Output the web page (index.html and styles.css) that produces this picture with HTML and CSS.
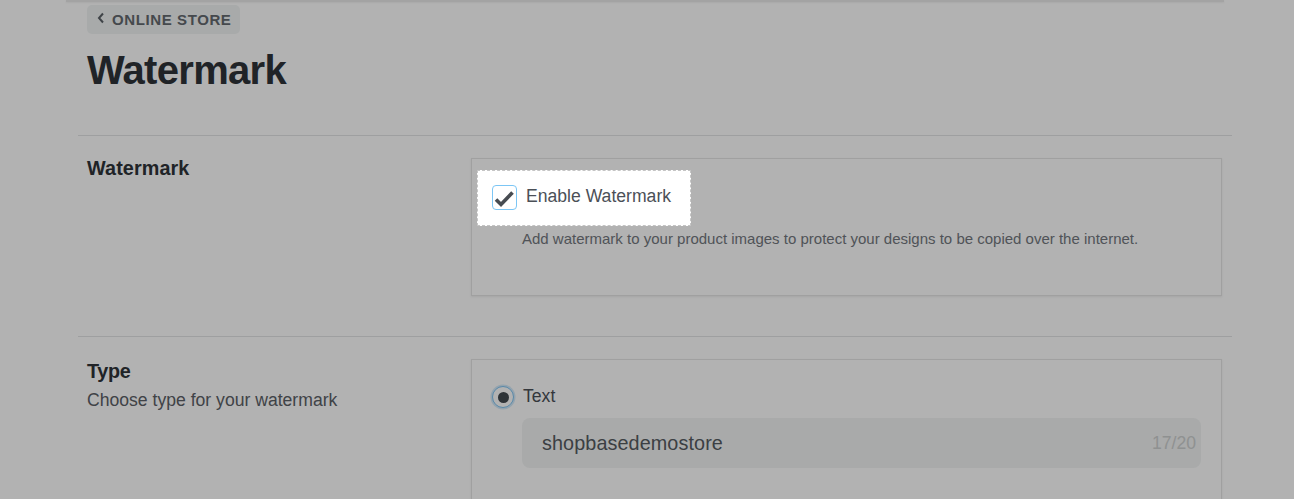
FILE: index.html
```html
<!DOCTYPE html>
<html lang="en">
<head>
<meta charset="utf-8">
<title>Watermark</title>
<link rel="stylesheet" href="styles.css">
</head>
<body>
<div class="topbar"></div>
<main class="page">
  <header class="page-header">
    <a class="breadcrumb" href="#">
      <svg class="chev" width="8" height="12" viewBox="0 0 8 12"><path d="M6 1.5 L2 6 L6 10.5" fill="none" stroke="currentColor" stroke-width="2"/></svg>
      <span>ONLINE STORE</span>
    </a>
    <h1 class="title">Watermark</h1>
  </header>

  <section class="section">
    <div class="section-info">
      <h2 class="section-title section-title-first">Watermark</h2>
    </div>
    <div class="card card-first">
      <label class="spotlight">
        <span class="checkbox">
          <svg width="23" height="23" viewBox="0 0 23 23"><path d="M3 13.5 L8 18.5 L19.5 6.5" fill="none" stroke="#474c52" stroke-width="3.6"/></svg>
        </span>
        <span class="check-label">Enable Watermark</span>
      </label>
      <p class="help">Add watermark to your product images to protect your designs to be copied over the internet.</p>
    </div>
  </section>

  <section class="section">
    <div class="section-info">
      <h2 class="section-title">Type</h2>
      <p class="section-desc">Choose type for your watermark</p>
    </div>
    <div class="card card-second">
      <div class="radio-row">
        <span class="radio"><span class="radio-dot"></span></span>
        <span class="radio-label">Text</span>
      </div>
      <div class="text-input">
        <span class="input-value">shopbasedemostore</span>
        <span class="counter">17/20</span>
      </div>
    </div>
  </section>
</main>
</body>
</html>
```
FILE: styles.css
```css
html, body {
  margin: 0;
  padding: 0;
  height: 100%;
  overflow: hidden;
  background: #ffffff;
  font-family: "Liberation Sans", Arial, sans-serif;
}

.topbar {
  height: 2px;
  margin-left: 66px;
  width: 1158px;
  background: #eaeaea;
  box-shadow: 0 1px 2px rgba(0, 0, 0, 0.06);
}

.page {
  width: 1154px;
  margin-left: 78px;
}

.page-header {
  padding: 3px 9px 42px;
}

.breadcrumb {
  display: inline-flex;
  align-items: center;
  gap: 7px;
  height: 29px;
  padding: 0 9px 0 10px;
  border-radius: 5px;
  background: #f1f4f4;
  color: #63696f;
  text-decoration: none;
  font-weight: bold;
  font-size: 15px;
  letter-spacing: 0.6px;
}

.chev {
  color: #5c6268;
  margin-top: -4px;
}

.title {
  margin: 13px 0 0;
  font-size: 40px;
  line-height: 46px;
  letter-spacing: -0.7px;
  font-weight: bold;
  color: #2e3338;
}

.section {
  display: grid;
  grid-template-columns: 384px 1fr;
  padding: 22px 10px 40px 9px;
  border-top: 1px solid #e2e4e5;
}

.section-title {
  margin: 0;
  font-size: 19.8px;
  line-height: 24px;
  letter-spacing: -0.3px;
  font-weight: bold;
  color: #2e3338;
}

.section-title-first {
  margin-top: -2px;
  letter-spacing: 0.1px;
}

.section-desc {
  margin: 4px 0 0;
  font-size: 17.6px;
  line-height: 26px;
  color: #5b6066;
}

.card {
  box-sizing: border-box;
  border: 1px solid #e6e6e6;
  box-shadow: 0 1px 2px rgba(0, 0, 0, 0.08);
  background: #ffffff;
}

.card-first {
  height: 138px;
  padding: 11px 20px 20px;
}

.spotlight {
  position: relative;
  z-index: 5;
  display: flex;
  align-items: center;
  gap: 9px;
  width: fit-content;
  margin-left: -15px;
  padding: 14px 19px 15px 14px;
  border: 1px dashed #c4c4c4;
  background: #ffffff;
  box-shadow: 0 0 0 4000px rgba(0, 0, 0, 0.3);
}

.checkbox {
  box-sizing: border-box;
  width: 25px;
  height: 25px;
  border: 1px solid #7cc6f5;
  border-radius: 4px;
  background: #ffffff;
  display: flex;
  align-items: center;
  justify-content: center;
}

.check-label {
  font-size: 17.6px;
  line-height: 20px;
  margin-top: -3px;
  color: #4b5057;
}

.help {
  margin: 3px 0 0 30px;
  font-size: 15px;
  line-height: 20px;
  color: #73787e;
}

.card-second {
  padding: 26px 20px 40px;
}

.radio-row {
  display: flex;
  align-items: center;
  gap: 9px;
}

.radio {
  box-sizing: border-box;
  width: 22px;
  height: 22px;
  border-radius: 50%;
  border: 1.5px solid #80c4f2;
  box-shadow: 0 0 0 1.5px rgba(128, 196, 242, 0.35);
  background: #ffffff;
  display: flex;
  align-items: center;
  justify-content: center;
}

.radio-dot {
  width: 11px;
  height: 11px;
  border-radius: 50%;
  background: #434950;
}

.radio-label {
  font-size: 17.6px;
  line-height: 22px;
  margin-top: -2px;
  color: #4b5057;
}

.text-input {
  display: flex;
  align-items: center;
  justify-content: space-between;
  height: 50px;
  margin: 10px 0 0 30px;
  padding: 0 5px 0 20px;
  border-radius: 8px;
  background: #f2f4f4;
}

.input-value {
  font-size: 19.8px;
  letter-spacing: 0.1px;
  color: #565b61;
}

.counter {
  font-size: 17.6px;
  color: #cdd0d0;
}
```
